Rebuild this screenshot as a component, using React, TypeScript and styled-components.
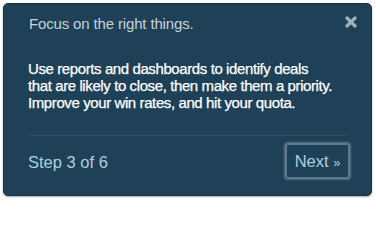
import React from "react";
import styled, { createGlobalStyle } from "styled-components";

const GlobalStyle = createGlobalStyle`
  html, body {
    margin: 0;
    padding: 0;
    background: #ffffff;
  }
  body {
    padding: 3px;
    font-family: "Liberation Sans", Arial, sans-serif;
  }
`;

export default function App() {
  return (
    <>
      <GlobalStyle />
      <Card>
        <Header>
          <Title>Focus on the right things.</Title>
          <CloseButton aria-label="Close">
            <svg width="12" height="12" viewBox="0 0 12 12">
              <path
                d="M2 2 L10 10 M10 2 L2 10"
                stroke="currentColor"
                strokeWidth="3.2"
                strokeLinecap="round"
              />
            </svg>
          </CloseButton>
        </Header>
        <Body>
          Use reports and dashboards to identify deals
          <br />
          that are likely to close, then make them a priority. Improve your win
          rates, and hit your quota.
        </Body>
        <Divider />
        <Footer>
          <StepLabel>Step 3 of 6</StepLabel>
          <NextButton>
            Next <Chevrons>»</Chevrons>
          </NextButton>
        </Footer>
      </Card>
    </>
  );
}

const Card = styled.div`
  box-sizing: border-box;
  width: 369px;
  height: 193px;
  padding: 11px 24px 0 24px;
  background-color: #1e4157;
  border: 1px solid #173447;
  border-radius: 5px;
  box-shadow: 0 1px 2px rgba(0, 0, 0, 0.35);
  display: flex;
  flex-direction: column;
`;

const Header = styled.div`
  display: flex;
  justify-content: space-between;
  align-items: flex-start;
`;

const Title = styled.h2`
  margin: 0;
  padding-left: 1px;
  font-size: 15px;
  font-weight: normal;
  line-height: 18px;
  letter-spacing: -0.15px;
  color: #c6d2da;
`;

const CloseButton = styled.button`
  margin: 1px -10px 0 0;
  padding: 0;
  border: none;
  background: none;
  color: #9db0bd;
  cursor: pointer;
  display: flex;
`;

const Body = styled.p`
  margin: 27px 0 0 0;
  font-size: 15px;
  line-height: 17px;
  letter-spacing: -0.4px;
  color: #ffffff;
  -webkit-text-stroke: 0.25px #ffffff;
`;

const Divider = styled.hr`
  margin: 24px 0 0 0;
  border: none;
  border-top: 1px solid #2b5068;
  height: 0;
`;

const Footer = styled.div`
  display: flex;
  justify-content: space-between;
  align-items: center;
  padding-top: 7px;
`;

const StepLabel = styled.span`
  font-size: 16.5px;
  color: #acd0e0;
  margin-top: 3px;
`;

const NextButton = styled.button`
  box-sizing: border-box;
  width: 65px;
  height: 36px;
  margin-right: -3px;
  padding: 0;
  background: transparent;
  border: 2px solid #5d7b8b;
  border-radius: 3px;
  box-shadow: 0 0 2px 1px rgba(120, 150, 165, 0.6);
  font-family: "Liberation Sans", Arial, sans-serif;
  font-size: 16.5px;
  color: #acd0e0;
  cursor: pointer;
`;

const Chevrons = styled.span`
  font-size: 13px;
`;
